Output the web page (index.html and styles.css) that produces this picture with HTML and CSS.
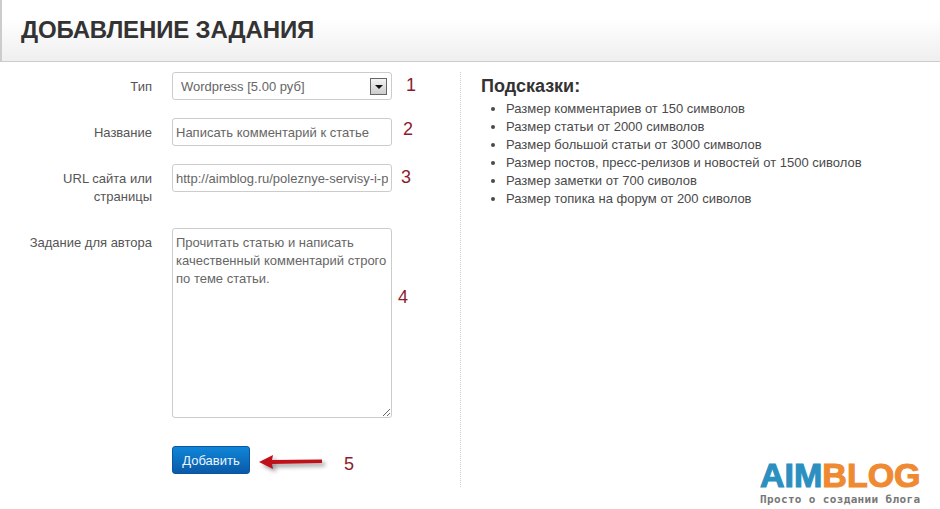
FILE: index.html
```html
<!DOCTYPE html>
<html lang="ru">
<head>
	<meta charset="UTF-8">
	<title>Добавление задания</title>
	<link rel="stylesheet" href="styles.css">
</head>
<body>
	<div class="page_head">
		<h1>Добавление задания</h1>
	</div>
	<div class="page_body">
		<form class="task_form">
			<div class="form_row row_type">
				<label>Тип</label>
				<div class="select_box">
					<select>
						<option>Wordpress [5.00 руб]</option>
					</select>
					<span class="select_btn"></span>
				</div>
				<span class="num num_1">1</span>
			</div>
			<div class="form_row row_name">
				<label>Название</label>
				<input class="field" type="text" value="Написать комментарий к статье">
				<span class="num num_2">2</span>
			</div>
			<div class="form_row row_url">
				<label>URL сайта или страницы</label>
				<input class="field" type="text" value="http://aimblog.ru/poleznye-servisy-i-programmy">
				<span class="num num_3">3</span>
			</div>
			<div class="form_row row_text">
				<label>Задание для автора</label>
				<textarea class="field area">Прочитать статью и написать качественный комментарий строго по теме статьи.</textarea>
				<span class="num num_4">4</span>
			</div>
			<div class="form_row row_submit">
				<button class="add_btn" type="button">Добавить</button>
				<svg class="arrow" width="70" height="24" viewBox="0 0 70 24">
					<path d="M1 12 L15 5 L14 10 L64 9.5 L64 13 L14 14 L15 19 Z" fill="#c0101a"/>
				</svg>
				<span class="num num_5">5</span>
			</div>
		</form>
		<div class="hints">
			<h2>Подсказки:</h2>
			<ul>
				<li>Размер комментариев от 150 символов</li>
				<li>Размер статьи от 2000 символов</li>
				<li>Размер большой статьи от 3000 символов</li>
				<li>Размер постов, пресс-релизов и новостей от 1500 сиволов</li>
				<li>Размер заметки от 700 сиволов</li>
				<li>Размер топика на форум от 200 сиволов</li>
			</ul>
		</div>
	</div>
	<div class="logo">
		<div class="logo_name"><span class="aim">AIM</span><span class="blog">BLOG</span></div>
		<div class="logo_sub">Просто о создании блога</div>
	</div>
</body>
</html>
```

FILE: styles.css
```css
html,body{
	margin: 0;
	padding: 0;
	height: 509px;
	overflow: hidden;
	background: #fff;
}
body{
	position: relative;
	font-family: "Liberation Sans", Arial, sans-serif;
	font-size: 13px;
	color: #555;
}
.page_head{
	height: 61px;
	border-left: 2px solid #ccc;
	border-bottom: 1px solid #ccc;
	background: linear-gradient(#fff, #fff 30%, #efefef);
}
.page_head h1{
	margin: 0;
	padding: 16px 0 0 19px;
	font-size: 24px;
	line-height: 28px;
	font-weight: bold;
	letter-spacing: -.15px;
	color: #333;
	text-transform: uppercase;
}
.page_body{
	display: flex;
	padding-top: 10px;
}
.task_form{
	width: 460px;
	height: 415px;
	border-right: 1px dotted #ccc;
}
.form_row{
	display: flex;
	align-items: flex-start;
}
.form_row label{
	width: 152px;
	box-sizing: border-box;
	margin-right: 20px;
	padding: 6px 0 0 27px;
	text-align: right;
	line-height: 18px;
}
.row_name{
	margin-top: 18px;
}
.row_url{
	margin-top: 18px;
}
.row_text{
	margin-top: 22px;
}
.row_submit{
	margin-top: 28px;
	padding-left: 172px;
}
.select_box{
	position: relative;
	width: 220px;
	height: 28px;
	box-sizing: border-box;
	border: 1px solid #ccc;
	border-radius: 3px;
}
.select_box select{
	width: 100%;
	height: 26px;
	padding: 0 0 0 8px;
	border: 0;
	background: none;
	appearance: none;
	font-family: inherit;
	font-size: 13px;
	color: #666;
}
.select_btn{
	position: absolute;
	top: 5px;
	right: 4px;
	width: 15px;
	height: 15px;
	border: 1px solid #666;
	background: linear-gradient(#f4f4f4, #ccc);
}
.select_btn:after{
	content: "";
	position: absolute;
	top: 6px;
	left: 4px;
	border: 4px solid transparent;
	border-top-color: #111;
	border-bottom: 0;
}
.field{
	display: block;
	width: 220px;
	height: 28px;
	box-sizing: border-box;
	margin: 0;
	padding: 0 3px;
	border: 1px solid #ccc;
	border-radius: 3px;
	font-family: inherit;
	font-size: 13px;
	color: #666;
	outline: 0;
}
.area{
	height: 190px;
	padding: 5px 3px;
	line-height: 18px;
	resize: both;
}
.num{
	font-size: 18px;
	line-height: 20px;
	color: #8c1c2c;
}
.num_1{
	margin: 3px 0 0 14px;
}
.num_2{
	margin: 1px 0 0 11px;
}
.num_3{
	margin: 3px 0 0 9px;
}
.num_4{
	margin: 59px 0 0 6px;
}
.num_5{
	margin: 8px 0 0 16px;
}
.add_btn{
	width: 78px;
	height: 28px;
	padding: 0;
	border: 1px solid #0a55a0;
	border-radius: 3px;
	background: linear-gradient(#0f86d8, #0a5aa8);
	font-family: inherit;
	font-size: 13px;
	color: #eaf5ff;
}
.arrow{
	margin: 4px 0 0 8px;
	filter: drop-shadow(3px 3px 2px rgba(0,0,0,.4));
}
.hints{
	padding: 3px 0 0 20px;
}
.hints h2{
	margin: 0;
	font-size: 18px;
	line-height: 22px;
	font-weight: bold;
	color: #333;
}
.hints ul{
	margin: 3px 0 0;
	padding: 0 0 0 25px;
}
.hints li{
	line-height: 18px;
	color: #4a4a4a;
}
/* логотип поверх страницы */
.logo{
	position: absolute;
	left: 760px;
	top: 458px;
	width: 170px;
}
.logo_name{
	font-weight: bold;
	font-size: 34px;
	line-height: 35px;
	-webkit-text-stroke: 1.1px;
}
.aim{
	color: #2b8fc0;
}
.blog{
	color: #ef8a33;
}
.logo_sub{
	font-family: "DejaVu Sans Mono", monospace;
	font-size: 11px;
	line-height: 13px;
	font-weight: bold;
	letter-spacing: .35px;
	color: #777;
}
```
